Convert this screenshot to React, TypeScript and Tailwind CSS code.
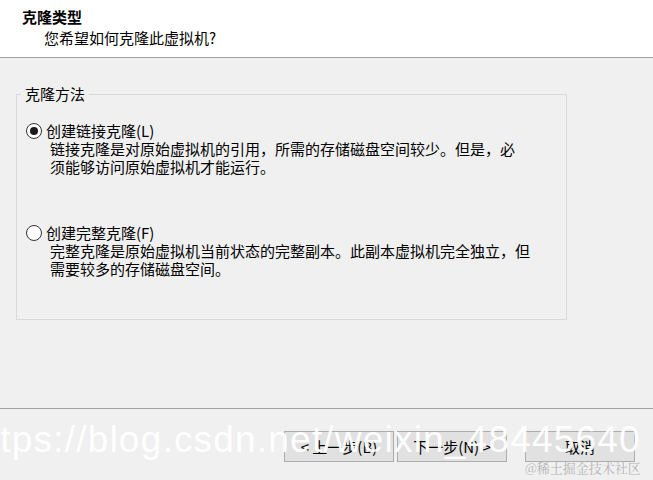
function Radio({ checked }: { checked?: boolean }) {
  return (
    <span className="w-[16px] h-[16px] rounded-full border border-[#333333] bg-white flex items-center justify-center shrink-0">
      {checked && <span className="w-[8px] h-[8px] rounded-full bg-[#1a1a1a]" />}
    </span>
  );
}

function WizardButton({ label }: { label: string }) {
  return (
    <button className="w-[110px] h-[31px] bg-[#e1e1e1] border border-[#adadad] text-[15px] leading-none text-black">
      {label}
    </button>
  );
}

export default function App() {
  return (
    <div className="relative w-[653px] h-[480px] overflow-hidden bg-[#f0f0f0] text-[15px] text-black font-['Noto_Sans_CJK_SC','Noto_Sans',sans-serif]">
      <div className="h-[58px] bg-white border-b border-[#a0a0a0] pl-[22px] pt-[7px]">
        <div className="font-bold leading-[20px]">克隆类型</div>
        <div className="pl-[22px] mt-[1px] leading-[20px]">您希望如何克隆此虚拟机?</div>
      </div>

      <div className="h-[351px] px-[16px] pt-[27px] border-b border-[#a0a0a0]">
        <fieldset className="w-[551px] h-[235px] p-0 m-0 border border-[#d9d9d9]">
          <legend className="ml-[4px] px-[4px] leading-[18px]">克隆方法</legend>
          <div className="pt-[19px] px-[9px]">
            <div className="flex items-center gap-[4px] h-[18px]">
              <Radio checked />
              <span>创建链接克隆(L)</span>
            </div>
            <div className="pl-[24px] leading-[18px]">
              链接克隆是对原始虚拟机的引用，所需的存储磁盘空间较少。但是，必
              <br />
              须能够访问原始虚拟机才能运行。
            </div>

            <div className="flex items-center gap-[4px] h-[18px] mt-[48px]">
              <Radio />
              <span>创建完整克隆(F)</span>
            </div>
            <div className="pl-[24px] leading-[18px]">
              完整克隆是原始虚拟机当前状态的完整副本。此副本虚拟机完全独立，但
              <br />
              需要较多的存储磁盘空间。
            </div>
          </div>
        </fieldset>
      </div>

      <div className="flex justify-end pr-[18px] pt-[22px]">
        <div className="flex gap-[3px]">
          <WizardButton label="< 上一步(B)" />
          <WizardButton label="下一步(N) >" />
        </div>
        <div className="ml-[18px]">
          <WizardButton label="取消" />
        </div>
      </div>

      {/* watermark over the footer */}
      <div className="absolute left-[-33px] top-[418px] text-[37px] leading-[44px] tracking-[1.2px] text-white/95 whitespace-nowrap font-['Liberation_Sans',sans-serif] pointer-events-none">
        https://blog.csdn.net/weixin_48445640
      </div>
      <div className="absolute left-[525px] top-[460px] text-[13px] leading-[16px] text-[#b4b4b4] whitespace-nowrap font-['Noto_Serif_CJK_SC','Noto_Sans_CJK_SC',serif]">
        @稀土掘金技术社区
      </div>
    </div>
  );
}
